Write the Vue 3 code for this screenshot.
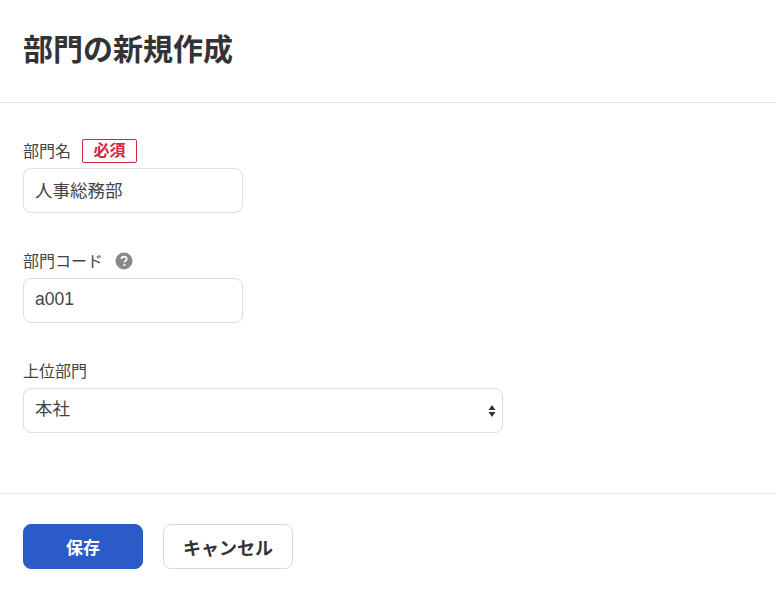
<script setup>
const title = "部門の新規作成";
</script>

<template>
  <div class="page">
    <h1 class="title">{{ title }}</h1>
    <form class="form" @submit.prevent>
      <div class="field">
        <div class="label-row">
          <label>部門名</label>
          <span class="required">必須</span>
        </div>
        <input class="input" type="text" value="人事総務部" />
      </div>
      <div class="field">
        <div class="label-row">
          <label>部門コード</label>
          <svg class="help" viewBox="0 0 18 18" width="18" height="18">
            <circle cx="9" cy="9" r="8.5" fill="#8a8786" />
            <path d="M6.4 7.1c0-1.5 1.1-2.4 2.7-2.4s2.6.9 2.6 2.2c0 1-.5 1.5-1.3 2-.7.5-1 .8-1 1.5" fill="none" stroke="#fff" stroke-width="1.7" />
            <circle cx="9.4" cy="13.1" r="1.1" fill="#fff" />
          </svg>
        </div>
        <input class="input" type="text" value="a001" />
      </div>
      <div class="field">
        <div class="label-row">
          <label>上位部門</label>
        </div>
        <div class="select">
          <span>本社</span>
          <svg class="arrows" viewBox="0 0 8 12" width="8" height="12">
            <path d="M4 0 7.5 5H.5zM4 12 .5 7h7z" fill="#333" />
          </svg>
        </div>
      </div>
    </form>
    <div class="actions">
      <button class="btn primary" type="button">保存</button>
      <button class="btn" type="button">キャンセル</button>
    </div>
  </div>
</template>

<style scoped>
.page {
  width: 776px;
  height: 589px;
  overflow: hidden;
  color: #333;
  font-family: "Liberation Sans", "Noto Sans CJK JP", sans-serif;
}

.title {
  margin: 0;
  height: 103px;
  padding: 32px 23px 0;
  box-sizing: border-box;
  border-bottom: 1px solid #e6e6e6;
  font-size: 30px;
  line-height: 36px;
  font-weight: 700;
}

.form {
  padding: 36px 23px 0;
  height: 391px;
  box-sizing: border-box;
  border-bottom: 1px solid #e6e6e6;
}

.field {
  margin-bottom: 36px;
}

.label-row {
  display: flex;
  align-items: flex-start;
  height: 25px;
  margin-bottom: 4px;
  font-size: 16px;
  line-height: 26px;
  color: #444;
}

.required {
  margin-left: 11px;
  width: 55px;
  height: 24px;
  line-height: 22px;
  text-align: center;
  box-sizing: border-box;
  border: 1px solid #d0293b;
  border-radius: 2px;
  color: #d0293b;
  font-size: 16px;
  font-weight: 700;
}

.help {
  margin: 3px 0 0 12px;
}

.input,
.select {
  display: block;
  width: 220px;
  height: 45px;
  padding: 0 11px 3px;
  box-sizing: border-box;
  border: 1px solid #ddd;
  border-radius: 8px;
  background: #fff;
  color: #444;
  font: inherit;
  font-size: 17.5px;
}

.select {
  width: 480px;
  display: flex;
  align-items: center;
  justify-content: space-between;
  padding-right: 6px;
  padding-bottom: 6px;
}

.arrows {
  margin-top: 6px;
}

.actions {
  display: flex;
  gap: 20px;
  padding: 30px 23px 0;
}

.btn {
  width: 130px;
  height: 45px;
  padding: 0;
  border: 1px solid #d9d9d9;
  border-radius: 8px;
  background: #fff;
  color: #333;
  font: inherit;
  font-size: 18px;
  font-weight: 700;
}

.primary {
  width: 120px;
  border-color: #2a5bc8;
  background: #2a5bc8;
  color: #fff;
  font-size: 17px;
}
</style>
